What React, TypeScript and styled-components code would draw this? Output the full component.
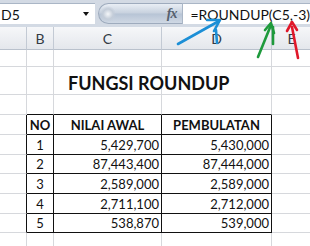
import styled, { createGlobalStyle } from "styled-components";

const GlobalStyle = createGlobalStyle`
  html, body {
    margin: 0;
    padding: 0;
    background: #ffffff;
    overflow: hidden;
  }
  body {
    font-family: Lato, "Liberation Sans", sans-serif;
  }
`;

const COLS = [27, 27, 108, 110, 40];
const LETTERS = ["", "B", "C", "D", "E"];

const rows = [
  { h: 17 },
  { h: 28, title: true },
  { h: 20, tableTop: true },
  { h: 20, head: true },
  { h: 20, data: ["1", "5,429,700", "5,430,000"] },
  { h: 19, data: ["2", "87,443,400", "87,444,000"] },
  { h: 20, data: ["3", "2,589,000", "2,589,000"] },
  { h: 20, data: ["4", "2,711,100", "2,712,000"] },
  { h: 19, data: ["5", "538,870", "539,000"] },
  { h: 20 },
];

const App = () => {
  return (
    <Screen>
      <GlobalStyle />
      <FormulaBar>
        <NameBox>
          <span>D5</span>
          <DropArrow />
        </NameBox>
        <Knob>
          <Fx>fx</Fx>
        </Knob>
        <FormulaInput>=ROUNDUP(C5,-3)</FormulaInput>
      </FormulaBar>
      <Gap />
      <Sheet>
        {LETTERS.map((l, i) => (
          <ColHead key={"h" + i}>{l}</ColHead>
        ))}
        {rows.map((r, ri) => {
          const inTable = !!(r.head || r.data);
          const lastData = ri === 8;
          return COLS.map((_, ci) => {
            const tableCol = ci >= 1 && ci <= 3;
            const darkBottom = tableCol && (r.tableTop || inTable);
            const darkRight = inTable && ci <= 3;
            let content: any = null;
            let align = "left";
            let bold = false;
            if (r.head && tableCol) {
              content = ["NO", "NILAI AWAL", "PEMBULATAN"][ci - 1];
              align = "center";
              bold = true;
            }
            if (r.data && tableCol) {
              content = r.data[ci - 1];
              align = ci === 1 ? "center" : "right";
            }
            return (
              <Cell
                key={ri + "-" + ci}
                $h={r.h}
                $darkBottom={darkBottom || (lastData && tableCol)}
                $darkRight={darkRight}
                $align={align}
                $bold={bold}
              >
                {r.title && ci === 2 ? <Title>FUNGSI ROUNDUP</Title> : content}
              </Cell>
            );
          });
        })}
      </Sheet>
      <Arrows width="310" height="246" viewBox="0 0 310 246">
        <g fill="none" strokeLinecap="round" strokeLinejoin="round">
          <g stroke="#1c8fd6" strokeWidth="2.6">
            <path d="M178 44 L219 21" />
            <path d="M207 20 L220 20 L214 31" />
            <path d="M216 30 L217 43" />
          </g>
          <g stroke="#1e9a3c" strokeWidth="2.6">
            <path d="M258 57 L271 25" />
            <path d="M265 30 L271 23 L274 33" />
            <path d="M273 27 L273 44" />
          </g>
          <g stroke="#e0182a" strokeWidth="2.6">
            <path d="M298 58 L292 27" />
            <path d="M287 31 L292 22 L297 30" />
          </g>
        </g>
      </Arrows>
    </Screen>
  );
};

export default App;

const Screen = styled.div`
  position: relative;
  width: 310px;
  height: 246px;
  overflow: hidden;
  background: #ffffff;
`;

const FormulaBar = styled.div`
  display: flex;
  align-items: stretch;
  height: 21px;
  padding-top: 3px;
  background: #d3dae4;
`;

const NameBox = styled.div`
  width: 95px;
  display: flex;
  align-items: center;
  justify-content: space-between;
  padding: 0 6px 0 1px;
  box-sizing: border-box;
  background: #ffffff;
  border-top: 1px solid #aab6c6;
  font-size: 14px;
  color: #111111;
`;

const DropArrow = styled.span`
  width: 0;
  height: 0;
  border-left: 3.5px solid transparent;
  border-right: 3.5px solid transparent;
  border-top: 4px solid #111111;
`;

const Knob = styled.div`
  margin-left: 3px;
  width: 84px;
  display: flex;
  align-items: center;
  justify-content: flex-end;
  padding-right: 5px;
  box-sizing: border-box;
  border-radius: 11px 0 0 11px;
  background:
    radial-gradient(circle at 9px 10px, #f4f6f9 0, #c4cdd9 5px, transparent 8px),
    linear-gradient(#e9eef5, #c7d1de 48%, #b7c4d5 52%, #cfd8e4);
  border: 1px solid #9eabbd;
  border-right: none;
`;

const Fx = styled.span`
  font-family: "Liberation Serif", serif;
  font-style: italic;
  font-weight: bold;
  font-size: 14px;
  color: #56606e;
  letter-spacing: -1px;
`;

const FormulaInput = styled.div`
  flex: 1;
  display: flex;
  align-items: center;
  padding-left: 8px;
  background: #ffffff;
  border-top: 1px solid #aab6c6;
  border-left: 1px solid #aab6c6;
  font-size: 14px;
  color: #111111;
`;

const Gap = styled.div`
  height: 3px;
  background: #d3dae4;
`;

const Sheet = styled.div`
  display: grid;
  grid-template-columns: ${COLS.map((c) => c + "px").join(" ")};
`;

const ColHead = styled.div`
  height: 23px;
  box-sizing: border-box;
  display: flex;
  align-items: center;
  justify-content: center;
  background: linear-gradient(#f6f7f9, #e4e7ec);
  border-right: 1px solid #c3cad4;
  border-bottom: 1px solid #b9c1cc;
  font-size: 14px;
  color: #333a44;
`;

const Cell = styled.div<{
  $h: number;
  $darkBottom?: boolean;
  $darkRight?: boolean;
  $align: string;
  $bold: boolean;
}>`
  position: relative;
  height: ${(p) => p.$h}px;
  box-sizing: border-box;
  border-right: 1px solid ${(p) => (p.$darkRight ? "#111111" : "#d6d8dc")};
  border-bottom: 1px solid ${(p) => (p.$darkBottom ? "#111111" : "#d6d8dc")};
  display: flex;
  align-items: center;
  justify-content: ${(p) =>
    p.$align === "right" ? "flex-end" : p.$align === "center" ? "center" : "flex-start"};
  padding: 0 2px;
  font-size: 13px;
  font-weight: ${(p) => (p.$bold ? 700 : 400)};
  color: #111111;
  white-space: nowrap;
`;

const Title = styled.span`
  position: absolute;
  left: 14px;
  top: 5px;
  font-size: 18px;
  font-weight: 700;
  color: #111111;
  white-space: nowrap;
`;

const Arrows = styled.svg`
  position: absolute;
  left: 0;
  top: 0;
  pointer-events: none;
`;
